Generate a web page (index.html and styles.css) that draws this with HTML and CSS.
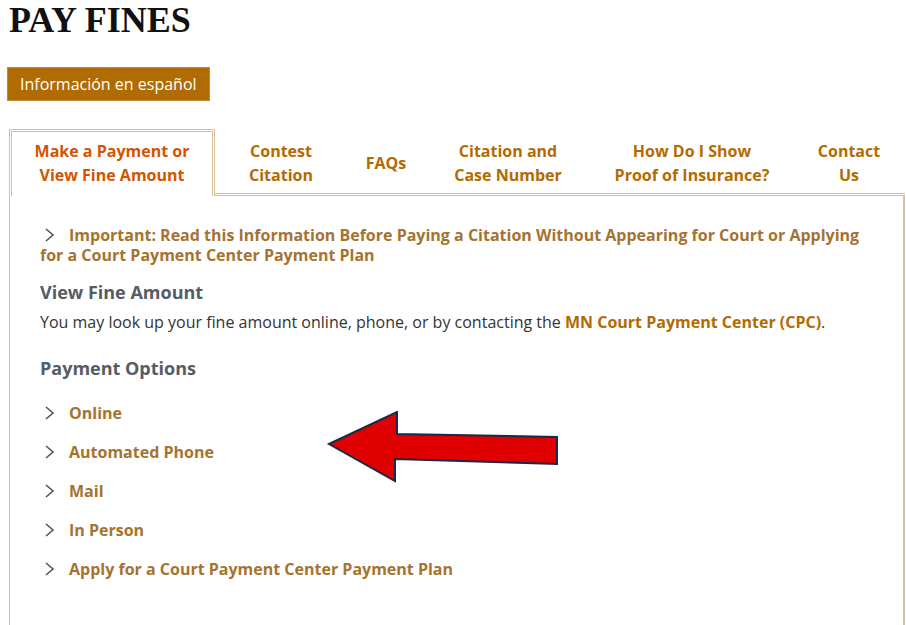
FILE: index.html
```html
<!DOCTYPE html>
<html lang="en">
<head>
    <meta charset="UTF-8">
    <meta name="viewport" content="width=device-width, initial-scale=1.0">
    <title>Pay Fines</title>
    <link rel="stylesheet" href="styles.css">
</head>
<body>
    <h1 class="page-title">PAY FINES</h1>
    <a class="lang-btn" href="#">Información en español</a>

    <div class="tabs">
        <a class="tab active" href="#">Make a Payment or<br>View Fine Amount</a>
        <a class="tab" href="#">Contest<br>Citation</a>
        <a class="tab" href="#">FAQs</a>
        <a class="tab" href="#">Citation and<br>Case Number</a>
        <a class="tab" href="#">How Do I Show<br>Proof of Insurance?</a>
        <a class="tab" href="#">Contact<br>Us</a>
    </div>

    <div class="panel">
        <a class="toggle important" href="#"><svg class="chev" width="29" height="14" viewBox="0 0 29 14"><path d="M6 1 L13 7 L6 13" fill="none" stroke="#555" stroke-width="1.6"/></svg>Important: Read this Information Before Paying a Citation Without Appearing for Court or Applying for a Court Payment Center Payment Plan</a>

        <h2 class="sub-title">View Fine Amount</h2>
        <p class="intro">You may look up your fine amount online, phone, or by contacting the <a href="#">MN Court Payment Center (CPC)</a>.</p>

        <h2 class="sub-title options-title">Payment Options</h2>
        <ul class="options">
            <li><a class="toggle" href="#"><svg class="chev" width="29" height="14" viewBox="0 0 29 14"><path d="M6 1 L13 7 L6 13" fill="none" stroke="#555" stroke-width="1.6"/></svg>Online</a></li>
            <li><a class="toggle" href="#"><svg class="chev" width="29" height="14" viewBox="0 0 29 14"><path d="M6 1 L13 7 L6 13" fill="none" stroke="#555" stroke-width="1.6"/></svg>Automated Phone</a></li>
            <li><a class="toggle" href="#"><svg class="chev" width="29" height="14" viewBox="0 0 29 14"><path d="M6 1 L13 7 L6 13" fill="none" stroke="#555" stroke-width="1.6"/></svg>Mail</a></li>
            <li><a class="toggle" href="#"><svg class="chev" width="29" height="14" viewBox="0 0 29 14"><path d="M6 1 L13 7 L6 13" fill="none" stroke="#555" stroke-width="1.6"/></svg>In Person</a></li>
            <li><a class="toggle" href="#"><svg class="chev" width="29" height="14" viewBox="0 0 29 14"><path d="M6 1 L13 7 L6 13" fill="none" stroke="#555" stroke-width="1.6"/></svg>Apply for a Court Payment Center Payment Plan</a></li>
        </ul>

        <!-- pointer drawn over the content -->
        <svg class="arrow" width="240" height="80" viewBox="0 0 240 80">
            <polygon points="2,33 70,1 70,23 230,26 230,53 68,48 68,70" fill="#e00000" stroke="#1b2848" stroke-width="2" stroke-linejoin="miter"/>
        </svg>
    </div>
</body>
</html>
```

FILE: styles.css
```css
body {
    margin: 0;
    padding: 0 1px 0 9px;
    font-family: "Open Sans", Arial, sans-serif;
    font-size: 16px;
    color: #333;
    background: #fff;
}
a {
    text-decoration: none;
}
.page-title {
    font-family: "Liberation Serif", "Times New Roman", serif;
    font-weight: bold;
    font-size: 36px;
    line-height: 40px;
    color: #111;
    margin: 0;
}
.lang-btn {
    display: inline-block;
    margin: 27px 0 0 -2px;
    padding: 0 12px;
    height: 32px;
    line-height: 32px;
    background-color: #b06c00;
    border: 1px solid #c08a3a;
    color: #fff;
    font-size: 16px;
}
.tabs {
    display: grid;
    grid-template-columns: 206px 132px 78px 166px 202px 1fr;
    margin-top: 28px;
    border-bottom: 3px double #d9bf98;
}
.tab {
    display: flex;
    align-items: center;
    justify-content: center;
    text-align: center;
    height: 64px;
    padding-top: 4px;
    box-sizing: border-box;
    font-weight: bold;
    font-size: 16px;
    line-height: 24px;
    color: #b36b00;
}
.tab.active {
    color: #d35400;
    border: 3px double #d9bf98;
    border-bottom: none;
    margin-bottom: -3px;
    height: 67px;
    background: #fff;
    padding: 2px 0 4px 0;
}
.panel {
    position: relative;
    border-left: 1px solid #d9bf98;
    border-right: 2px solid #d9bf98;
    padding: 29px 30px 60px 30px;
}
.toggle {
    display: block;
    font-weight: bold;
    font-size: 16px;
    line-height: 20px;
    color: #a5732f;
}
.chev {
    display: inline-block;
    vertical-align: -1px;
}
.sub-title {
    font-size: 18px;
    line-height: 24px;
    color: #555c66;
    margin: 15px 0 0 0;
}
.intro {
    margin: 6px 0 0 0;
    line-height: 24px;
}
.intro a {
    color: #b36b00;
    font-weight: bold;
}
.options-title {
    margin-top: 22px;
}
.options {
    list-style: none;
    margin: 14px 0 0 0;
    padding: 0;
}
.options li {
    padding: 9px 0 10px 0;
}
.arrow {
    position: absolute;
    left: 317px;
    top: 215px;
}
```
